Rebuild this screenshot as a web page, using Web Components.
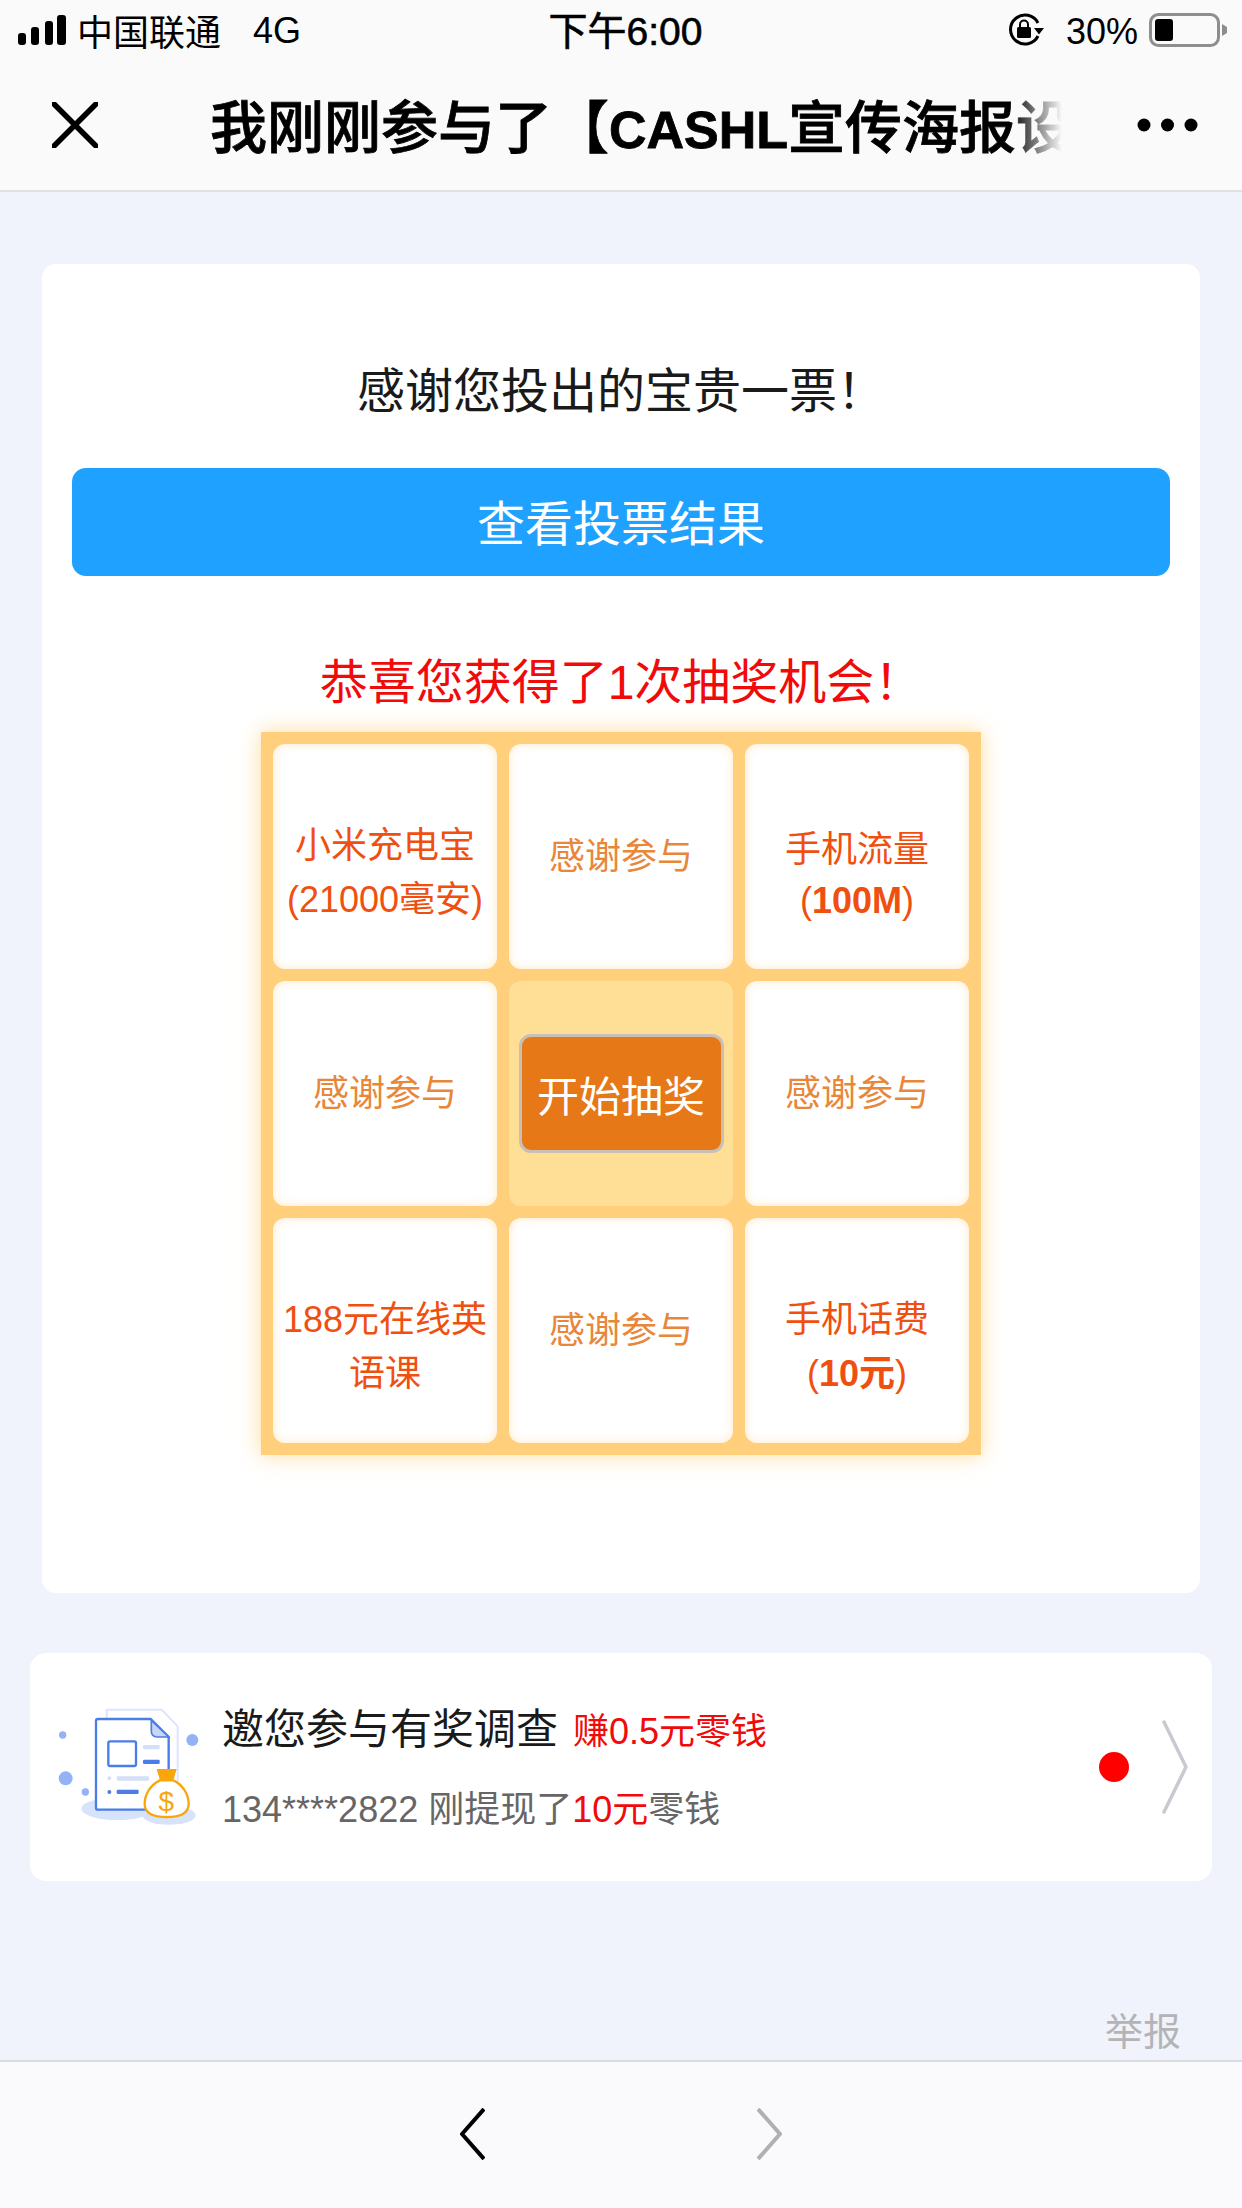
<!DOCTYPE html>
<html lang="zh-CN">
<head>
<meta charset="utf-8">
<title>CASHL</title>
<style>
  html, body { margin: 0; padding: 0; }
  body {
    width: 1242px;
    height: 2208px;
    overflow: hidden;
    font-family: "Liberation Sans", "Noto Sans CJK SC", sans-serif;
  }
  em { font-style: normal; color: #f10a0a; }
</style>
</head>
<body>
<wx-page>
  <wx-status-bar slot="top"></wx-status-bar>
  <wx-nav-bar slot="top">我刚刚参与了【<b style="font-size:52px">CASHL</b>宣传海报设</wx-nav-bar>

  <vote-card>
    <span slot="thanks">感谢您投出的宝贵一票！</span>
    <span slot="action">查看投票结果</span>
    <span slot="prize">恭喜您获得了1次抽奖机会！</span>
    <lottery-grid>
      <lottery-cell prize>小米充电宝<br>(21000毫安)</lottery-cell>
      <lottery-cell>感谢参与</lottery-cell>
      <lottery-cell prize tight>手机流量<br>(<b>100M</b>)</lottery-cell>
      <lottery-cell>感谢参与</lottery-cell>
      <lottery-start>开始抽奖</lottery-start>
      <lottery-cell>感谢参与</lottery-cell>
      <lottery-cell prize>188元在线英语课</lottery-cell>
      <lottery-cell>感谢参与</lottery-cell>
      <lottery-cell prize>手机话费<br>(<b>10元</b>)</lottery-cell>
    </lottery-grid>
  </vote-card>

  <survey-card>
    <span slot="title">邀您参与有奖调查</span>
    <span slot="reward">赚0.5元零钱</span>
    <span slot="note">134****2822 刚提现了<em>10元</em>零钱</span>
  </survey-card>

  <span slot="report">举报</span>
  <wx-bottom-bar slot="bottom"></wx-bottom-bar>
</wx-page>

<script>
class WxPage extends HTMLElement {
  constructor() {
    super();
    this.attachShadow({ mode: 'open' });
    this.shadowRoot.innerHTML = `
      <style>
        :host {
          display: flex;
          flex-direction: column;
          width: 1242px;
          height: 2208px;
          background: #f0f3fb;
        }
        .main {
          flex: 1;
          display: flex;
          flex-direction: column;
          padding: 72px 30px 0;
        }
        .report {
          margin-top: auto;
          padding: 0 31px 6px 0;
          align-self: flex-end;
          font-size: 38px;
          line-height: 44px;
          color: #b4b4b6;
        }
      </style>
      <slot name="top"></slot>
      <div class="main">
        <slot></slot>
        <div class="report"><slot name="report"></slot></div>
      </div>
      <slot name="bottom"></slot>
    `;
  }
}

class WxStatusBar extends HTMLElement {
  constructor() {
    super();
    this.attachShadow({ mode: 'open' });
    this.shadowRoot.innerHTML = `
      <style>
        :host {
          display: grid;
          grid-template-columns: 1fr auto 1fr;
          align-items: center;
          height: 60px;
          padding: 0 15px 0 18px;
          background: #fafafa;
          color: #000;
          font-size: 36px;
        }
        .left, .right { display: flex; align-items: center; }
        .carrier { margin-left: 11px; }
        .net { margin-left: 32px; padding-top: 2px; }
        .right { justify-content: flex-end; }
        .pct { margin: 0 11px 0 22px; padding-top: 4px; }
        .time { padding: 0 0 4px 6px; font-size: 39px; -webkit-text-stroke: .6px #000; }
        svg { display: block; }
      </style>
      <div class="left">
        <svg width="48" height="30" viewBox="0 0 48 30">
          <rect x="0" y="18" width="8" height="12" rx="3"/>
          <rect x="13" y="12" width="8" height="18" rx="3"/>
          <rect x="27" y="6" width="8" height="24" rx="3"/>
          <rect x="39" y="0" width="9" height="30" rx="3"/>
        </svg>
        <span class="carrier">中国联通</span>
        <span class="net">4G</span>
      </div>
      <div class="time">下午6:00</div>
      <div class="right">
        <svg width="36" height="36" viewBox="0 0 36 36">
          <path d="M30 24A14.500 14.500 0 1 1 30 11" fill="none" stroke="#000" stroke-width="3"/>
          <path d="M26 16h10l-5 6.500z"/>
          <rect x="9" y="15" width="14" height="11" rx="1.500"/>
          <path d="M12 15v-2.500a4 4 0 0 1 8 0V15" fill="none" stroke="#000" stroke-width="2"/>
        </svg>
        <span class="pct">30%</span>
        <svg width="78" height="34" viewBox="0 0 78 34">
          <rect x="1.500" y="1.500" width="68" height="31" rx="8" fill="none" stroke="#8e8e8e" stroke-width="3"/>
          <rect x="6" y="6" width="18" height="22" rx="3"/>
          <path d="M73 11l5 3v6l-5 3z" fill="#8e8e8e"/>
        </svg>
      </div>
    `;
  }
}

class WxNavBar extends HTMLElement {
  constructor() {
    super();
    this.attachShadow({ mode: 'open' });
    this.shadowRoot.innerHTML = `
      <style>
        :host {
          display: flex;
          align-items: center;
          height: 130px;
          padding: 0 44px 0 52px;
          background: #fafafa;
          border-bottom: 2px solid #dfe1e7;
          color: #000;
        }
        .title {
          flex: none;
          margin: 0 0 4px 112px;
          white-space: nowrap;
          font-size: 57px;
          font-weight: 500;
          -webkit-text-stroke: .8px #000;
          -webkit-mask-image: linear-gradient(to right, #000 800px, transparent 852px);
          mask-image: linear-gradient(to right, #000 800px, transparent 852px);
        }
        svg { display: block; flex: none; }
        .more { margin-left: auto; }
      </style>
      <svg width="46" height="46" viewBox="0 0 46 46">
        <path d="M2 2L44 44M44 2L2 44" stroke="#000" stroke-width="5.500" stroke-linecap="round"/>
      </svg>
      <div class="title"><slot></slot></div>
      <svg class="more" width="61" height="14" viewBox="0 0 61 14">
        <circle cx="7" cy="7" r="6.500"/><circle cx="30.500" cy="7" r="6.500"/><circle cx="54" cy="7" r="6.500"/>
      </svg>
    `;
  }
}

class VoteCard extends HTMLElement {
  constructor() {
    super();
    this.attachShadow({ mode: 'open' });
    this.shadowRoot.innerHTML = `
      <style>
        :host {
          display: flex;
          flex-direction: column;
          align-items: center;
          height: 1329px;
          margin: 0 12px;
          padding: 0 30px;
          box-sizing: border-box;
          background: #fff;
          border-radius: 14px;
        }
        .thanks {
          margin-top: 93px;
          font-size: 48px;
          line-height: 70px;
          color: #1a1a1a;
        }
        .action {
          width: 100%;
          height: 108px;
          margin-top: 41px;
          padding-bottom: 5px;
          box-sizing: border-box;
          display: flex;
          align-items: center;
          justify-content: center;
          background: #1fa2ff;
          border-radius: 14px;
          color: #fff;
          font-size: 48px;
        }
        .prize {
          margin-top: 72px;
          font-size: 48px;
          line-height: 70px;
          color: #f10a0a;
        }
        .grid { margin-top: 14px; }
      </style>
      <div class="thanks"><slot name="thanks"></slot></div>
      <div class="action"><slot name="action"></slot></div>
      <div class="prize"><slot name="prize"></slot></div>
      <div class="grid"><slot></slot></div>
    `;
  }
}

class LotteryGrid extends HTMLElement {
  constructor() {
    super();
    this.attachShadow({ mode: 'open' });
    this.shadowRoot.innerHTML = `
      <style>
        :host {
          display: grid;
          grid-template-columns: repeat(3, 224px);
          grid-auto-rows: 225px;
          gap: 12px;
          padding: 12px;
          background: #ffcf7c;
          box-shadow: 0 0 20px rgba(255, 207, 124, .75);
        }
      </style>
      <slot></slot>
    `;
  }
}

class LotteryCell extends HTMLElement {
  constructor() {
    super();
    this.attachShadow({ mode: 'open' });
    this.shadowRoot.innerHTML = `
      <style>
        :host {
          display: flex;
          align-items: center;
          justify-content: center;
          padding: 0 8px;
          box-sizing: border-box;
          background: #fff;
          border-radius: 12px;
          box-shadow: inset 0 0 10px rgba(255, 207, 124, .45);
          text-align: center;
          font-size: 36px;
          line-height: 54px;
          color: #e8873a;
        }
        :host([prize]) {
          align-items: flex-start;
          padding: 75px 8px 0;
          color: #f0500f;
        }
        :host([tight]) {
          padding-top: 80px;
          line-height: 51px;
        }
      </style>
      <div><slot></slot></div>
    `;
  }
}

class LotteryStart extends HTMLElement {
  constructor() {
    super();
    this.attachShadow({ mode: 'open' });
    this.shadowRoot.innerHTML = `
      <style>
        :host {
          display: flex;
          align-items: center;
          justify-content: center;
          background: #ffdf96;
          border-radius: 12px;
        }
        .btn {
          width: 205px;
          height: 119px;
          box-sizing: border-box;
          display: flex;
          align-items: center;
          justify-content: center;
          background: #e67817;
          border: 3px solid #c9bfb4;
          border-radius: 12px;
          color: #fff;
          font-size: 42px;
        }
      </style>
      <div class="btn"><slot></slot></div>
    `;
  }
}

class SurveyCard extends HTMLElement {
  constructor() {
    super();
    this.attachShadow({ mode: 'open' });
    this.shadowRoot.innerHTML = `
      <style>
        :host {
          display: flex;
          align-items: center;
          height: 228px;
          margin-top: 60px;
          padding: 0 24px;
          box-sizing: border-box;
          background: #fff;
          border-radius: 16px;
        }
        .art { display: block; flex: none; margin-right: 18px; }
        .text { flex: 1; min-width: 0; }
        .head { display: flex; align-items: baseline; color: #1a1a1a; font-size: 42px; line-height: 60px; }
        .reward { margin-left: 15px; font-size: 36px; color: #f10a0a; }
        .note { margin-top: 23px; font-size: 36px; line-height: 50px; color: #666; }
        .dot { flex: none; width: 30px; height: 30px; border-radius: 50%; background: #f00; }
        .arrow { display: block; flex: none; margin-left: 33px; }
      </style>
      <svg class="art" width="150" height="124" viewBox="100 195 450 370">
        <ellipse cx="290" cy="505" rx="108" ry="34" fill="#d7e2fb"/>
        <ellipse cx="445" cy="525" rx="80" ry="28" fill="#d7e2fb"/>
        <path d="M258 208h165l48 50v190H258z" fill="#fff" stroke="#dbe5fb" stroke-width="6"/>
        <path d="M232 236h158l54 54v210a8 8 0 0 1-8 8H232a6 6 0 0 1-6-6V242a6 6 0 0 1 6-6z" fill="#fff" stroke="#4a7de8" stroke-width="7"/>
        <path d="M392 240v34a16 16 0 0 0 16 16h36z" fill="#c7d6f7" stroke="#4a7de8" stroke-width="5"/>
        <rect x="263" y="303" width="83" height="74" rx="5" fill="none" stroke="#4a7de8" stroke-width="7"/>
        <rect x="367" y="314" width="50" height="13" rx="3" fill="#d4dff8"/>
        <rect x="367" y="358" width="50" height="13" rx="3" fill="#4a7de8"/>
        <circle cx="266" cy="414" r="6" fill="#d4dff8"/>
        <rect x="288" y="408" width="97" height="13" rx="4" fill="#d4dff8"/>
        <circle cx="266" cy="455" r="6" fill="#4a7de8"/>
        <rect x="288" y="448" width="66" height="13" rx="4" fill="#4a7de8"/>
        <circle cx="126" cy="284" r="11" fill="#93b3f4"/>
        <circle cx="515" cy="299" r="18" fill="#93b3f4"/>
        <circle cx="135" cy="414" r="21" fill="#93b3f4"/>
        <circle cx="194" cy="455" r="11" fill="#93b3f4"/>
        <path d="M418 420c-30 14-46 44-46 70 0 26 22 40 66 40s66-14 66-40c0-26-16-56-46-70z" fill="#fff" stroke="#f9a60c" stroke-width="7"/>
        <path d="M408 386h60l-10 34h-40z" fill="#f9a60c"/>
        <text x="437" y="511" text-anchor="middle" font-size="84" font-family="Liberation Sans" fill="#f9a60c">$</text>
      </svg>
      <div class="text">
        <div class="head"><slot name="title"></slot><span class="reward"><slot name="reward"></slot></span></div>
        <div class="note"><slot name="note"></slot></div>
      </div>
      <div class="dot"></div>
      <svg class="arrow" width="26" height="94" viewBox="0 0 26 94">
        <path d="M2 2L24 47L2 92" fill="none" stroke="#c8cad2" stroke-width="3.500" stroke-linecap="round" stroke-linejoin="round"/>
      </svg>
    `;
  }
}

class WxBottomBar extends HTMLElement {
  constructor() {
    super();
    this.attachShadow({ mode: 'open' });
    this.shadowRoot.innerHTML = `
      <style>
        :host {
          display: flex;
          justify-content: center;
          align-items: center;
          gap: 272px;
          height: 148px;
          padding-bottom: 2px;
          box-sizing: border-box;
          background: #fafafc;
          border-top: 2px solid #dcdce4;
        }
        svg { display: block; }
      </style>
      <svg width="26" height="52" viewBox="0 0 26 52">
        <path d="M25 1L3 26L25 51" fill="none" stroke="#000" stroke-width="4" stroke-linejoin="round"/>
      </svg>
      <svg width="26" height="52" viewBox="0 0 26 52">
        <path d="M1 1L23 26L1 51" fill="none" stroke="#b0b0b0" stroke-width="4" stroke-linejoin="round"/>
      </svg>
    `;
  }
}

customElements.define('wx-page', WxPage);
customElements.define('wx-status-bar', WxStatusBar);
customElements.define('wx-nav-bar', WxNavBar);
customElements.define('vote-card', VoteCard);
customElements.define('lottery-grid', LotteryGrid);
customElements.define('lottery-cell', LotteryCell);
customElements.define('lottery-start', LotteryStart);
customElements.define('survey-card', SurveyCard);
customElements.define('wx-bottom-bar', WxBottomBar);
</script>
</body>
</html>
